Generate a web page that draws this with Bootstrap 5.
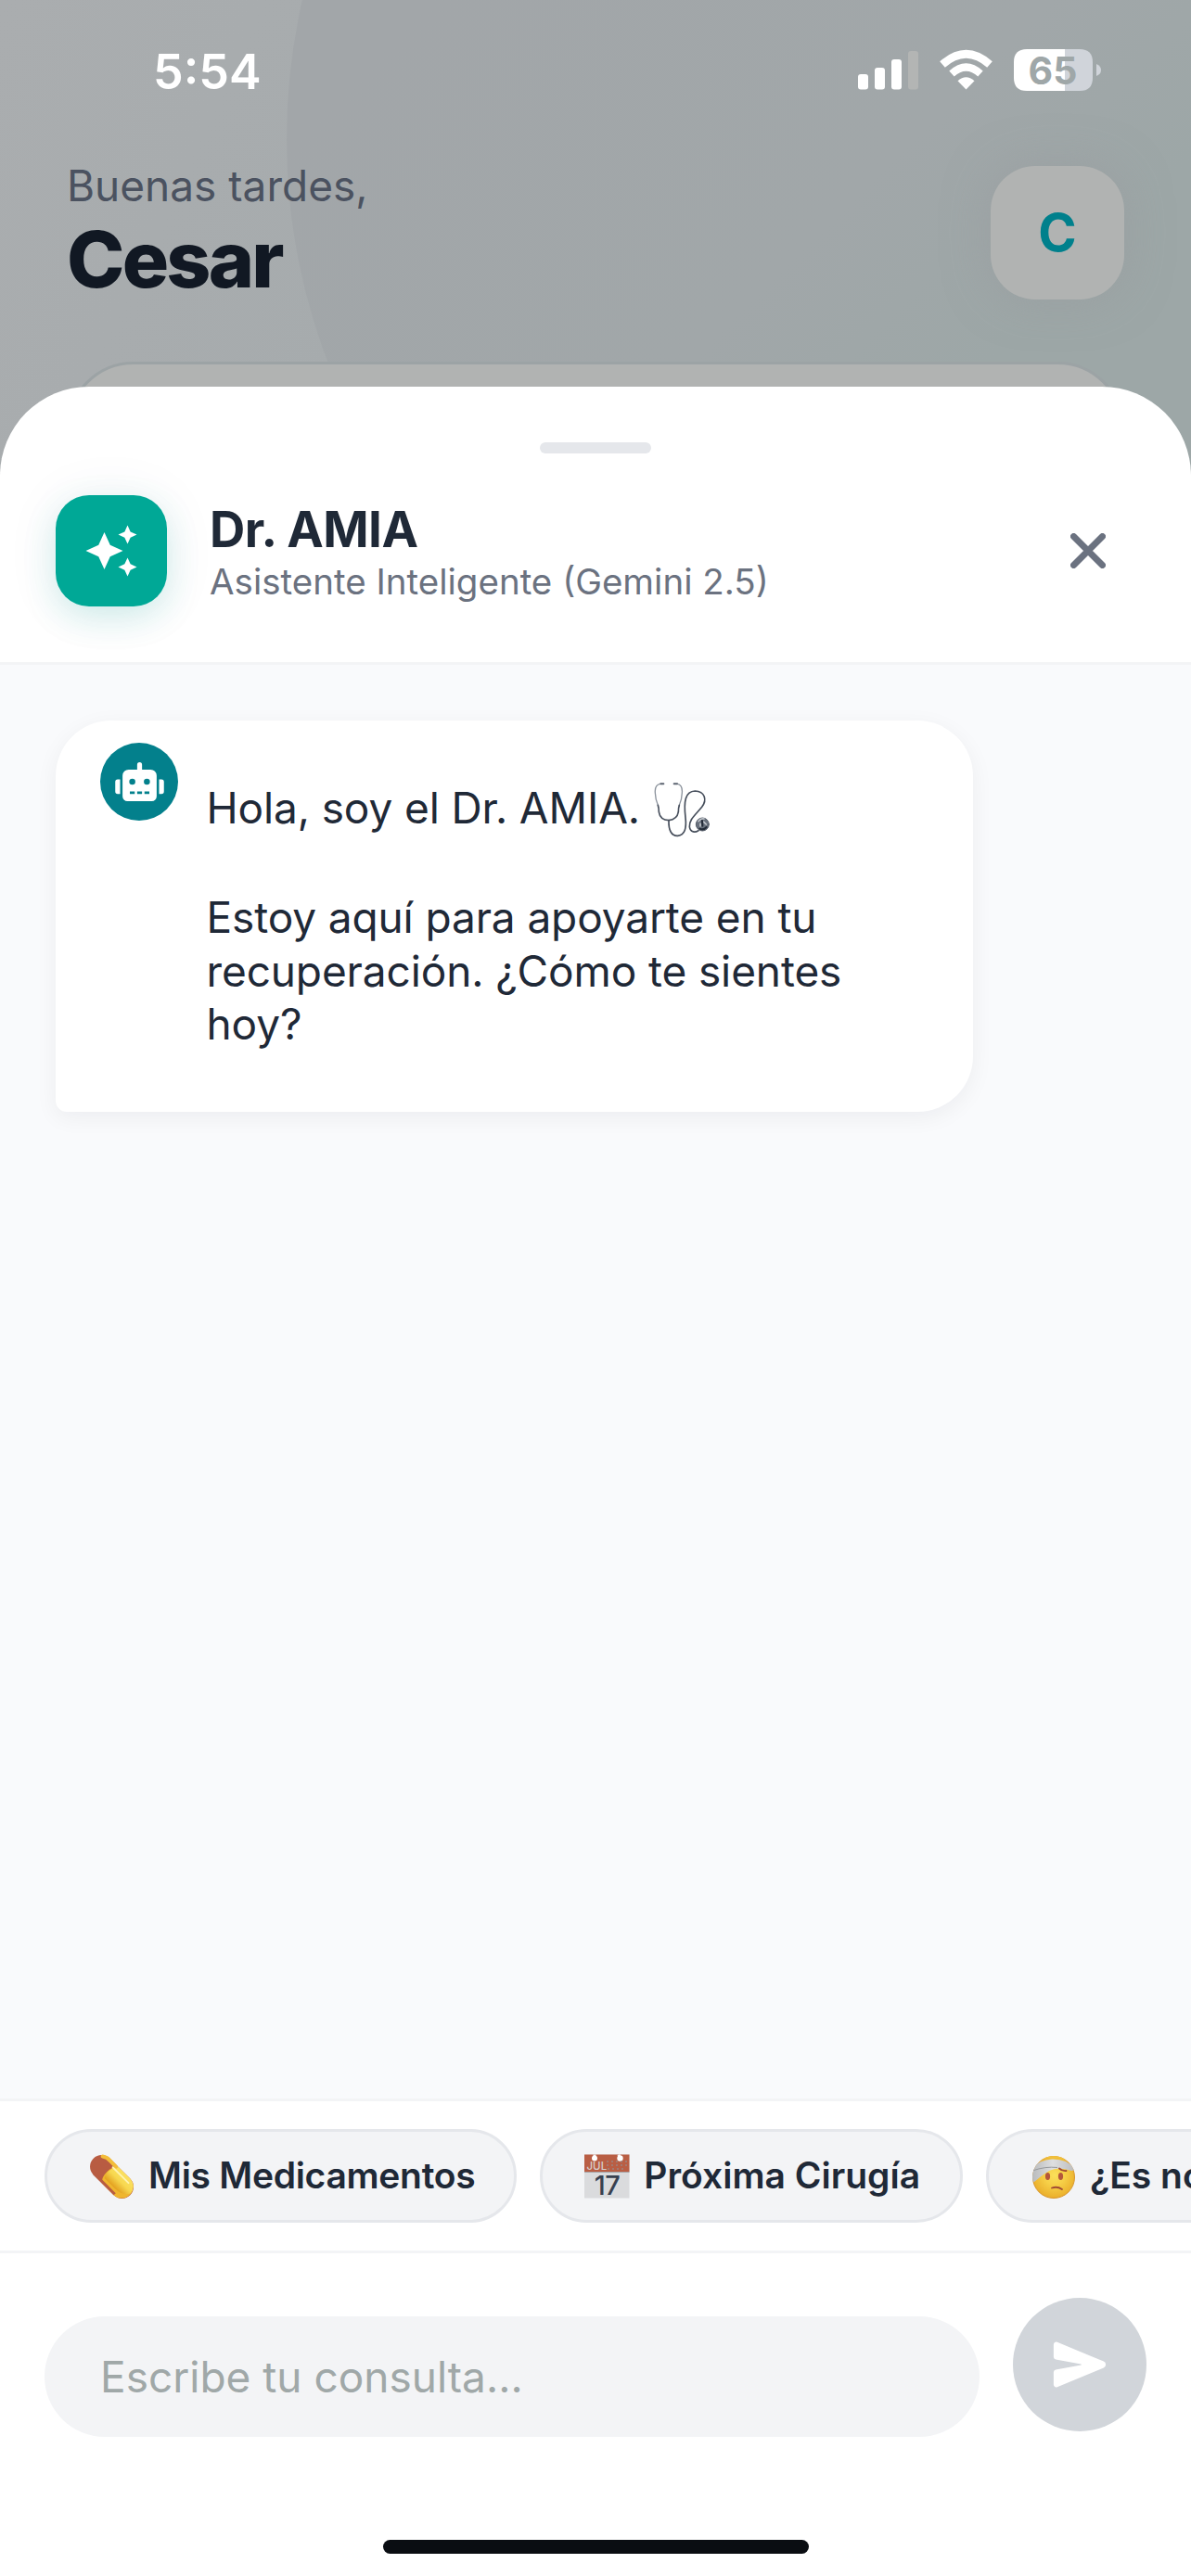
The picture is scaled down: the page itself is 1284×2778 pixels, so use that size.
<!DOCTYPE html>
<html lang="es">
<head>
<meta charset="utf-8">
<meta name="viewport" content="width=device-width, initial-scale=1">
<title>Dr. AMIA</title>
<link href="https://cdn.jsdelivr.net/npm/bootstrap@5.3.0/dist/css/bootstrap.min.css" rel="stylesheet">
<style>
  body { font-family: Inter, "Liberation Sans", sans-serif; color: #1f2937; }
  .screen { width: 1284px; height: 2778px; background: linear-gradient(115deg, #aaadaf 0%, #a6abad 22%, #a0a9a9 60%, #9ca6a6 100%); }
  .halo { width: 1350px; height: 1350px; left: 309px; top: -525px; background: linear-gradient(135deg, #a2a6a9 25%, #a1a7a9 50%, #9da7a7 62%); }
  .statusbar { height: 156px; padding: 48px 97px 0 165px; }
  .clock { font-size: 52px; font-weight: 600; line-height: 50px; margin-top: 5px; }
  .hello { height: 234px; padding: 0 72px; }
  .greet { font-size: 46px; line-height: 57px; color: #4b5260; padding-top: 16px; }
  .who { font-size: 84px; font-weight: 800; line-height: 102px; letter-spacing: -2.8px; color: #111823; }
  .initial { width: 144px; height: 144px; margin-top: 23px; border-radius: 48px; background: #b1b3b2; color: #00808c; font-size: 56px; font-weight: 700; box-shadow: 0 0 48px rgba(152,154,158,.5); }
  .peek { height: 27px; margin: 0 72px; }
  .peek-card { height: 200px; border: 3px solid #9ca3a5; border-radius: 72px; background: #b1b3b2; }
  .sheet { height: 2361px; border-radius: 96px 96px 0 0; background: #fff; }
  .grip { width: 120px; height: 12px; margin: 60px auto 0; border-radius: 6px; background: #e5e7eb; }
  .sheet-head { height: 228px; padding: 45px 60px 0; border-bottom: 3px solid #f3f4f6; }
  .logo { width: 120px; height: 120px; border-radius: 36px; background: #00a896; box-shadow: 0 12px 36px rgba(0,168,150,.16), 0 3px 60px rgba(60,80,130,.07); }
  .title { padding: 7px 0 0 46px; }
  .name { font-size: 53px; font-weight: 700; line-height: 60px; letter-spacing: -.5px; }
  .role { font-size: 38.5px; line-height: 48px; margin-top: 2px; color: #6b7280; }
  .close-x { margin: 41px 32px 0 0; }
  .talk { background: #f9fafc; padding: 60px 60px 0; }
  .bubble { width: 989px; height: 422px; padding: 24px 48px; border-radius: 60px 60px 60px 12px; background: #fff; box-shadow: 0 6px 24px rgba(20,25,40,.055); }
  .bot { width: 84px; height: 84px; background: #03808c; }
  .msg { font-size: 46px; line-height: 57.3px; letter-spacing: -.12px; padding: 42px 0 0 30.500px; }
  .msg p { height: 57.3px; margin: 0 0 61px; }
  .msg svg { margin-left: 15px; }
  .quick { height: 167px; padding-left: 48px; gap: 25px; border-top: 3px solid #f3f4f6; border-bottom: 3px solid #f3f4f6; }
  .chip { height: 101px; padding: 0 43px; gap: 14px; border: 3px solid #e5e7eb; border-radius: 51px; background: #f3f4f6; font-size: 39px; font-weight: 600; }
  .chip-meds { letter-spacing: -.3px; padding-right: 42px; }
  .composer { height: 309px; padding: 48px 48px 0; gap: 36px; }
  .field { height: 130px; margin-top: 20px; padding: 0 60px; border-radius: 65px; background: #f3f4f6; font-size: 46px; color: #a0a8a8; }
  .send { width: 144px; height: 144px; background: #d1d5da; }
  .home { width: 459px; height: 15px; margin: 0 auto 24px; border-radius: 8px; background: #0a0d12; }
</style>
<script src="https://cdn.jsdelivr.net/npm/bootstrap@5.3.0/dist/js/bootstrap.bundle.min.js"></script>
</head>
<body>
<div class="screen position-relative overflow-hidden d-flex flex-column">
  <div class="halo position-absolute rounded-circle"></div>

  <div class="statusbar position-relative d-flex justify-content-between align-items-start text-white">
    <span class="clock">5:54</span>
    <svg width="262" height="56" viewBox="925 48 262 56">
      <g fill="#fff">
        <rect x="925" y="80" width="11" height="16.500" rx="3"/>
        <rect x="943" y="73" width="11" height="23.500" rx="3"/>
        <rect x="961" y="64" width="11" height="32.500" rx="3"/>
        <rect x="979" y="55" width="11" height="41.500" rx="3" fill="#b3b5b4"/>
        <path d="M1041.500 96.500l-9-9.300q9-8 18 0z"/>
        <path d="M1026 79.500q15.500-14 31 0" fill="none" stroke="#fff" stroke-width="8"/>
        <path d="M1016 69.500q25.500-22.500 51 0" fill="none" stroke="#fff" stroke-width="8.500"/>
        <path d="M1148 53h16q14 0 14 14v17q0 14-14 14h-16z" fill="#d0d4da"/>
        <path d="M1148 53h-41q-14 0-14 14v17q0 14 14 14h41z"/>
        <path d="M1182 69q5 2 5 6.500t-5 6.500z" fill="#d0d4da"/>
      </g>
      <text x="1135" y="90.500" text-anchor="middle" font-size="41" font-weight="700" fill="#9fa7a8" font-family="Inter, sans-serif">65</text>
    </svg>
  </div>

  <div class="hello position-relative d-flex justify-content-between align-items-start">
    <div>
      <div class="greet">Buenas tardes,</div>
      <div class="who">Cesar</div>
    </div>
    <div class="initial d-flex align-items-center justify-content-center">C</div>
  </div>

  <div class="peek position-relative overflow-hidden"><div class="peek-card"></div></div>

  <main class="sheet position-relative d-flex flex-column">
    <div class="grip flex-shrink-0"></div>
    <header class="sheet-head flex-shrink-0 d-flex align-items-start">
      <div class="logo flex-shrink-0 d-flex align-items-center justify-content-center">
        <svg width="60" height="60" viewBox="0 0 24 24" fill="#fff"><path d="M19 1l-1.260 2.750L15 5l2.740 1.260L19 9l1.250-2.740L23 5l-2.750-1.250M9 4L6.500 9.500 1 12l5.500 2.500L9 20l2.500-5.500L17 12l-5.500-2.500M19 15l-1.260 2.740L15 19l2.740 1.250L19 23l1.250-2.750L23 19l-2.750-1.260"/></svg>
      </div>
      <div class="title flex-grow-1">
        <div class="name">Dr. AMIA</div>
        <div class="role">Asistente Inteligente (Gemini 2.5)</div>
      </div>
      <svg class="close-x" width="38" height="38" viewBox="0 0 38 38" stroke="#6b7280" stroke-width="7" stroke-linecap="round"><path d="M3.500 3.500l31 31M34.500 3.500l-31 31"/></svg>
    </header>

    <section class="talk flex-grow-1">
      <div class="bubble d-flex align-items-start">
        <div class="bot rounded-circle flex-shrink-0 d-flex align-items-center justify-content-center">
          <svg width="53" height="42" viewBox="0 0 640 512" fill="#fff"><path d="M32 224h32v192H32a32 32 0 0 1-32-32V256a32 32 0 0 1 32-32zm512-48v272a64 64 0 0 1-64 64H160a64 64 0 0 1-64-64V176a80 80 0 0 1 80-80h112V32a32 32 0 0 1 64 0v64h112a80 80 0 0 1 80 80zM264 256a40 40 0 1 0-40 40 40 40 0 0 0 40-40zm-8 128h-64v32h64zm96 0h-64v32h64zm104-128a40 40 0 1 0-40 40 40 40 0 0 0 40-40zm-8 128h-64v32h64zm192-128v128a32 32 0 0 1-32 32h-32V224h32a32 32 0 0 1 32 32z"/></svg>
        </div>
        <div class="msg">
          <p class="d-flex align-items-start">Hola, soy el Dr. AMIA.
            <svg width="62" height="60" viewBox="42 36 186 180" fill="none" stroke-linecap="round">
              <path d="M62 43Q44 46 46 72Q47 95 55 112M118 43Q135 46 133 72Q132 95 124 112" stroke="#8b929c" stroke-width="4"/>
              <path d="M64 43h9M107 43h10" stroke="#5c6470" stroke-width="6"/>
              <path d="M55 112Q58 120 58 134Q62 160 90 161Q117 158 121 134Q121 120 124 112" stroke="#4a525f" stroke-width="5"/>
              <path d="M90 161C89 192 98 212 119 211C142 209 148 186 144 152C138 100 143 67 175 66C206 67 215 94 197 118C174 146 156 158 157 182C160 202 176 200 186 194" stroke="#464e5b" stroke-width="5"/>
              <circle cx="199" cy="174" r="21" fill="#69717d" stroke="#555d69" stroke-width="3"/>
              <path d="M186 164q8-10 18-8M192 172v8M203 166l8 8" stroke="#c3c7cd" stroke-width="5"/>
              <path d="M190 188q12 6 22-5M198 162l1 17" stroke="#232b38" stroke-width="6"/>
            </svg>
          </p>
          Estoy aquí para apoyarte en tu<br>recuperación. ¿Cómo te sientes<br>hoy?
        </div>
      </div>
    </section>

    <div class="quick flex-shrink-0 d-flex align-items-center overflow-hidden text-nowrap">
      <div class="chip chip-meds flex-shrink-0 d-flex align-items-center">
        <svg width="52" height="52" viewBox="0 0 52 52">
          <defs>
            <linearGradient id="pillGold" x1="0" y1="0" x2="0" y2="1"><stop offset="0" stop-color="#fbe060"/><stop offset=".5" stop-color="#f7d850"/><stop offset="1" stop-color="#e3a01f"/></linearGradient>
          </defs>
          <g transform="rotate(45 26.500 26.500)">
            <rect x="-1.500" y="14" width="56" height="25" rx="12.500" fill="#b85c42"/>
            <path d="M24 14h17.500a12.500 12.500 0 0 1 0 25H24q-5-4-5-12.500T24 14z" fill="#efb52e"/>
            <path d="M24 14h17.500q11 1 12 11Q49 33 38 33H22q-3-4-2-10 1-6 4-9z" fill="url(#pillGold)"/>
            <path d="M4 18q4-3 9-2.500h9" stroke="#f3bd3a" stroke-width="4" fill="none" stroke-linecap="round"/>
            <path d="M20 18.500h24" stroke="#fff3b0" stroke-width="1.800" stroke-linecap="round"/>
            <path d="M10 37.500h32" stroke="#b85c42" stroke-width="3"/>
          </g>
        </svg>
        <span>Mis Medicamentos</span>
      </div>
      <div class="chip flex-shrink-0 d-flex align-items-center">
        <svg width="52" height="52" viewBox="0 0 52 52">
          <rect x="2" y="2.500" width="48.500" height="47" fill="#dadbdd"/>
          <rect x="2" y="2.500" width="48.500" height="18.500" fill="#b95e44"/>
          <path d="M2 21.500h48.500" stroke="#a7a4a6"/>
          <path d="M13 2.500v3M39 2.500l1 3" stroke="#f3f4f6" stroke-width="3"/>
          <circle cx="13" cy="6.500" r="3" fill="#fff"/><circle cx="40.500" cy="6.500" r="3.200" fill="#fff"/>
          <text x="4.500" y="19" font-size="11.500" fill="#d7cfcd" font-family="Inter, sans-serif" font-weight="500">JUL</text>
          <path d="M26 10h22M26 14h22M27 18h20" stroke="#9c8480" stroke-width="1.500" stroke-dasharray="2 3"/>
          <text x="26.500" y="46" text-anchor="middle" font-size="29" letter-spacing="-.5" fill="#384150" font-family="Inter, sans-serif" font-weight="500">17</text>
        </svg>
        <span>Próxima Cirugía</span>
      </div>
      <div class="chip flex-shrink-0 d-flex align-items-center">
        <svg width="52" height="52" viewBox="0 0 52 52">
          <defs>
            <clipPath id="faceClip"><circle cx="27" cy="27" r="23"/></clipPath>
            <radialGradient id="faceGold" cx=".52" cy=".45" r=".55"><stop offset="0" stop-color="#fbe05a"/><stop offset=".45" stop-color="#f6cf47"/><stop offset="1" stop-color="#eaae2b"/></radialGradient>
            <linearGradient id="gauze" x1="0" y1="0" x2="1" y2="0"><stop offset="0" stop-color="#b4b6b8"/><stop offset=".5" stop-color="#dedfe0"/><stop offset="1" stop-color="#b9babc"/></linearGradient>
          </defs>
          <circle cx="27" cy="27" r="22.500" fill="url(#faceGold)" stroke="#d8962c"/>
          <g clip-path="url(#faceClip)">
            <path d="M2 18Q10 9 25 7.500Q42 7 51 19L46 20Q32 15 22 20Q14 25 6 32L1 30z" fill="url(#gauze)"/>
            <path d="M4 20Q18 15 31 16.500" stroke="#97999c" fill="none"/>
            <path d="M13 7q14-5 26 0" stroke="#f2c23c" stroke-width="2.500" fill="none"/>
          </g>
          <ellipse cx="20.500" cy="26" rx="2.600" ry="4" fill="#b4573b"/>
          <ellipse cx="34.500" cy="26" rx="2.600" ry="4" fill="#b4573b"/>
          <path d="M33 17.500q3 3 7.500 2.500M25 38.500q6-2 11 1.500" stroke="#a04a33" stroke-width="1.800" fill="none" stroke-linecap="round"/>
        </svg>
        <span>¿Es normal?</span>
      </div>
    </div>

    <div class="composer flex-shrink-0 d-flex align-items-start">
      <div class="field flex-grow-1 d-flex align-items-center">Escribe tu consulta...</div>
      <div class="send rounded-circle flex-shrink-0 d-flex align-items-center justify-content-center">
        <svg width="60" height="60" viewBox="0 0 512 512" fill="#fff"><path d="M476.590 227.050l-.160-.070L49.350 49.840A23.560 23.560 0 0 0 27.140 52 24.650 24.650 0 0 0 16 72.590v113.290a24 24 0 0 0 19.520 23.570l232.930 43.070a4 4 0 0 1 0 7.860L35.530 303.450A24 24 0 0 0 16 327v113.310A23.570 23.570 0 0 0 26.590 460a23.940 23.940 0 0 0 13.220 4 24.550 24.550 0 0 0 9.520-1.930L476.400 285.940l.190-.090a32 32 0 0 0 0-58.800z"/></svg>
      </div>
    </div>
    <div class="home flex-shrink-0"></div>
  </main>
</div>
</body>
</html>
